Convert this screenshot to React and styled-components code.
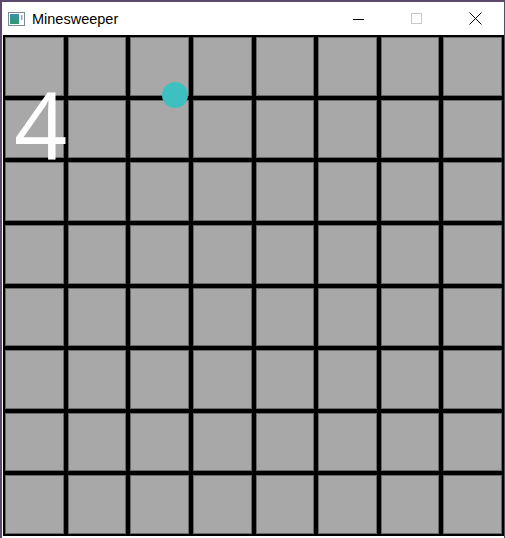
import styled, { createGlobalStyle } from "styled-components";

const GlobalStyle = createGlobalStyle`
  html, body {
    margin: 0;
    padding: 0;
    background: #5d4a6b;
    overflow: hidden;
  }
`;

// 창 전체
const Window = styled.div`
  width: 502px;
  height: 536px;
  margin: 2px 0 0 2px;
  background: #ffffff;
  display: flex;
  flex-direction: column;
`;

const TitleBar = styled.div`
  height: 33px;
  display: flex;
  align-items: center;
  padding-left: 6px;
  font-family: "Liberation Sans", Arial, sans-serif;
  font-size: 14.5px;
  color: #000;
`;

const Title = styled.span`
  margin-left: 7px;
  flex: 1;
  padding-top: 1px;
`;

const Control = styled.div`
  width: 58px;
  height: 33px;
  display: flex;
  align-items: center;
  justify-content: center;
`;

// 게임판
const Board = styled.div`
  position: relative;
  width: 501px;
  height: 501px;
  margin-left: 1px;
  box-sizing: border-box;
  padding: 2px;
  background: #000;
  display: grid;
  grid-template-columns: repeat(8, 1fr);
  grid-template-rows: repeat(8, 1fr);
  gap: 4px;
`;

const Cell = styled.div`
  background: #a8a8a8;
  box-shadow: inset 0 0 0 1px #6a6a6a;
`;

const Count = styled.div`
  position: absolute;
  left: 11px;
  top: 43px;
  font-family: "Open Sans", "Liberation Sans", sans-serif;
  font-weight: 400;
  font-size: 93px;
  line-height: 1;
  color: #fff;
`;

const Marker = styled.div`
  position: absolute;
  left: 159px;
  top: 47px;
  width: 26px;
  height: 26px;
  border-radius: 50%;
  background: #3fc0c0;
`;

const AppIcon = () => (
  <svg width="17" height="14" viewBox="0 0 17 14">
    <defs>
      <linearGradient id="g" x1="0" y1="0" x2="0" y2="1">
        <stop offset="0" stopColor="#3a8fb0" />
        <stop offset="1" stopColor="#2f9a6a" />
      </linearGradient>
    </defs>
    <rect x="0.5" y="0.5" width="16" height="13" fill="#fff" stroke="#7a8a96" />
    <rect x="2" y="2" width="9" height="10" fill="url(#g)" />
    <rect x="13" y="3" width="1.5" height="5" fill="#9aa6b0" />
  </svg>
);

const App = () => {
  const cells = Array.from({ length: 64 });

  return (
    <>
      <GlobalStyle />
      <Window>
        <TitleBar>
          <AppIcon />
          <Title>Minesweeper</Title>
          <Control>
            <svg width="12" height="12" viewBox="0 0 12 12">
              <line x1="0" y1="6.5" x2="11" y2="6.5" stroke="#000" strokeWidth="1" />
            </svg>
          </Control>
          <Control>
            <svg width="12" height="12" viewBox="0 0 12 12">
              <rect x="0.5" y="0.5" width="10" height="10" fill="none" stroke="#c8c8c8" />
            </svg>
          </Control>
          <Control>
            <svg width="13" height="13" viewBox="0 0 13 13">
              <path d="M0.5 0.5 L12.5 12.5 M12.5 0.5 L0.5 12.5" stroke="#000" strokeWidth="1" />
            </svg>
          </Control>
        </TitleBar>
        <Board>
          {cells.map((_, i) => (
            <Cell key={i} />
          ))}
          <Count>4</Count>
          <Marker />
        </Board>
      </Window>
    </>
  );
};

export default App;
